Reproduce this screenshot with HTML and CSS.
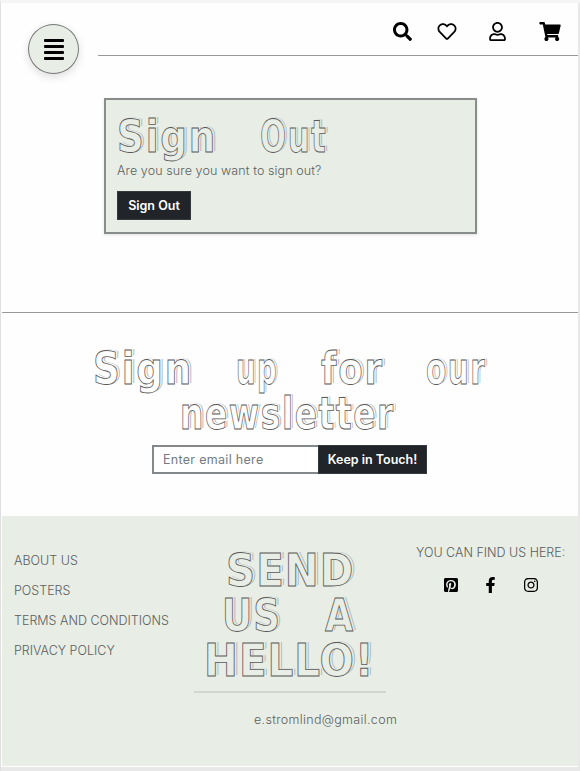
FILE: index.html
```html
<!DOCTYPE html>
<html lang="en">
<head>
<meta charset="utf-8">
<title>Sign Out</title>
<link rel="stylesheet" href="styles.css">
</head>
<body>
<div class="page">
  <header class="header">
    <button class="menu" aria-label="Menu"><span></span><span></span><span></span><span></span></button>
    <nav class="tools">
      <svg class="i-search" viewBox="0 0 512 512"><path d="M505 442.7L405.300 343c-4.500-4.500-10.600-7-17-7H372c27.600-35.300 44-79.700 44-128C416 93.100 322.900 0 208 0S0 93.100 0 208s93.100 208 208 208c48.300 0 92.700-16.400 128-44v16.300c0 6.400 2.500 12.500 7 17l99.700 99.700c9.400 9.400 24.600 9.400 33.900 0l28.300-28.300c9.400-9.400 9.400-24.600.1-34zM208 336c-70.700 0-128-57.200-128-128 0-70.700 57.200-128 128-128 70.700 0 128 57.200 128 128 0 70.700-57.200 128-128 128z"/></svg>
      <svg class="i-heart" viewBox="0 0 512 512"><path d="M458.400 64.300C400.600 15.700 311.300 23 256 79.300 200.700 23 111.400 15.600 53.600 64.300-21.600 127.600-10.600 230.800 43 285.500l175.400 178.700c10 10.200 23.400 15.900 37.600 15.900 14.300 0 27.600-5.600 37.600-15.800L469 285.600c53.500-54.700 64.700-157.900-10.600-221.300zm-23.600 187.500L259.400 430.500c-2.400 2.400-4.400 2.400-6.800 0L77.200 251.800c-36.500-37.200-43.900-107.600 7.300-150.700 38.900-32.700 98.900-27.800 136.500 10.500l35 35.700 35-35.700c37.800-38.500 97.800-43.200 136.500-10.600 51.100 43.100 43.500 113.900 7.300 150.800z"/></svg>
      <svg class="i-user" viewBox="0 0 448 512"><path d="M313.600 304c-28.700 0-42.500 16-89.600 16-47.100 0-60.800-16-89.600-16C60.200 304 0 364.200 0 438.400V464c0 26.500 21.500 48 48 48h352c26.500 0 48-21.500 48-48v-25.600c0-74.200-60.200-134.400-134.400-134.400zM400 464H48v-25.600c0-47.600 38.800-86.400 86.400-86.400 14.600 0 38.300 16 89.600 16 51.700 0 74.900-16 89.600-16 47.600 0 86.400 38.800 86.400 86.400V464zM224 288c79.500 0 144-64.500 144-144S303.500 0 224 0 80 64.500 80 144s64.500 144 144 144zm0-240c52.900 0 96 43.100 96 96s-43.100 96-96 96-96-43.100-96-96 43.100-96 96-96z"/></svg>
      <svg class="i-cart" viewBox="0 0 576 512"><path d="M528.120 301.319l47.273-208C578.806 78.301 567.391 64 551.990 64H159.208l-9.166-44.810C147.758 8.021 137.930 0 126.529 0H24C10.745 0 0 10.745 0 24v16c0 13.255 10.745 24 24 24h69.883l70.248 343.435C147.325 417.100 136 435.222 136 456c0 30.928 25.072 56 56 56s56-25.072 56-56c0-15.674-6.447-29.835-16.824-40h209.647C430.447 426.165 424 440.326 424 456c0 30.928 25.072 56 56 56s56-25.072 56-56c0-22.172-12.888-41.332-31.579-50.405l5.517-24.276c3.413-15.018-8.002-29.319-23.403-29.319H218.117l-6.545-32h293.145c11.206 0 20.920-7.754 23.403-18.681z"/></svg>
    </nav>
  </header>

  <main class="main">
    <section class="card">
      <h1 class="sketch sketch-card"><span class="line"><span class="word w-sign">Sign</span> <span class="word w-out">Out</span></span></h1>
      <p class="question">Are you sure you want to sign out?</p>
      <button class="btn signout">Sign Out</button>
    </section>
  </main>

  <section class="newsletter">
    <h2 class="sketch sketch-news">
      <span class="line"><span class="word w-sign">Sign</span> <span class="word w-up">up</span> <span class="word w-for">for</span> <span class="word w-our">our</span></span>
      <span class="line line-news"><span class="word w-news">newsletter</span></span>
    </h2>
    <form class="signup">
      <input type="email" placeholder="Enter email here">
      <button class="btn" type="button">Keep in Touch!</button>
    </form>
  </section>

  <footer class="footer">
    <ul class="links">
      <li>ABOUT US</li>
      <li>POSTERS</li>
      <li>TERMS AND CONDITIONS</li>
      <li>PRIVACY POLICY</li>
    </ul>
    <div class="hello">
      <h2 class="sketch sketch-hello">
        <span class="line line-send"><span class="word">SEND</span></span>
        <span class="line line-us"><span class="word w-us">US</span> <span class="word w-a">A</span></span>
        <span class="line line-hello"><span class="word">HELLO!</span></span>
      </h2>
      <hr>
      <p class="mail">e.stromlind@gmail.com</p>
    </div>
    <div class="social">
      <p class="find">YOU CAN FIND US HERE:</p>
      <div class="icons">
        <svg class="i-pin" viewBox="0 0 448 512"><path d="M448 80v352c0 26.500-21.500 48-48 48H154.400c9.800-16.400 22.400-40 27.400-59.300 3-11.500 15.300-58.400 15.300-58.400 8 15.300 31.400 28.200 56.300 28.200 74.100 0 127.400-68.100 127.400-152.700 0-81.100-66.200-141.800-151.400-141.800-106 0-162.200 71.100-162.200 148.600 0 36 19.200 80.800 49.800 95.100 4.700 2.200 7.100 1.200 8.200-3.300.8-3.400 5-20.100 6.800-27.800.6-2.500.3-4.600-1.700-7-10.100-12.300-18.300-34.900-18.300-56 0-54.200 41-106.600 110.900-106.600 60.300 0 102.600 41.100 102.600 99.900 0 66.400-33.500 112.400-77.200 112.400-24.100 0-42.100-19.900-36.400-44.400 6.900-29.200 20.300-60.700 20.300-81.800 0-53-75.500-45.700-75.500 25 0 21.700 7.300 36.500 7.300 36.500-31.400 132.800-36.100 134.500-29.600 192.600l2.200.8H48c-26.500 0-48-21.500-48-48V80c0-26.500 21.500-48 48-48h352c26.500 0 48 21.500 48 48z"/></svg>
        <svg class="i-fb" viewBox="0 0 320 512"><path d="M279.140 288l14.220-92.660h-88.910v-60.130c0-25.350 12.420-50.060 52.240-50.060h40.420V6.260S260.430 0 225.360 0c-73.220 0-121.080 44.380-121.080 124.720v70.620H22.890V288h81.390v224h100.170V288z"/></svg>
        <svg class="i-ig" viewBox="0 0 448 512"><path d="M224.100 141c-63.600 0-114.900 51.300-114.900 114.900s51.300 114.900 114.900 114.900S339 319.500 339 255.900 287.700 141 224.100 141zm0 189.600c-41.100 0-74.700-33.500-74.700-74.700s33.500-74.700 74.700-74.700 74.700 33.500 74.700 74.700-33.600 74.700-74.700 74.700zm146.400-194.300c0 14.900-12 26.800-26.800 26.800-14.900 0-26.800-12-26.800-26.800s12-26.800 26.800-26.800 26.800 12 26.800 26.800zm76.100 27.200c-1.700-35.900-9.900-67.700-36.200-93.900-26.200-26.200-58-34.400-93.900-36.200-37-2.100-147.900-2.100-184.900 0-35.800 1.700-67.600 9.900-93.900 36.100s-34.400 58-36.200 93.900c-2.100 37-2.100 147.900 0 184.900 1.700 35.900 9.900 67.700 36.200 93.900s58 34.400 93.900 36.200c37 2.100 147.900 2.100 184.900 0 35.900-1.700 67.700-9.900 93.900-36.200 26.200-26.200 34.400-58 36.200-93.900 2.100-37 2.100-147.800 0-184.800zM398.800 388c-7.800 19.600-22.900 34.700-42.600 42.600-29.500 11.700-99.500 9-132.100 9s-102.700 2.600-132.100-9c-19.600-7.800-34.700-22.900-42.600-42.600-11.700-29.500-9-99.500-9-132.100s-2.600-102.700 9-132.100c7.800-19.600 22.900-34.700 42.600-42.600 29.500-11.700 99.500-9 132.100-9s102.700-2.600 132.100 9c19.600 7.800 34.700 22.900 42.600 42.600 11.700 29.500 9 99.500 9 132.100s2.700 102.700-9 132.100z"/></svg>
      </div>
    </div>
  </footer>
</div>
</body>
</html>
```
FILE: styles.css
```css
* { box-sizing: border-box; }
html { height: 771px; overflow: hidden; background: #e8e8e8; }
body {
  margin: 0;
  height: 771px;
  border-top: 3px solid #f5f5f5;
  border-left: 1px solid #e0e0e0;
  font: 300 12.5px/20px Inter, "Liberation Sans", sans-serif;
  color: #5c5f60;
}
h1, h2, p, ul { margin: 0; padding: 0; }
ul { list-style: none; }
button { font: inherit; padding: 0; }

.page { width: 577px; height: 764px; padding-left: 1px; background: #fefefe; }

.header { display: flex; height: 53px; }
.menu {
  display: flex;
  flex: none;
  flex-direction: column;
  align-items: center;
  justify-content: center;
  gap: 3px;
  width: 51px;
  height: 50px;
  margin: 21px 19px 0 26px;
  border: 1px solid #777;
  border-radius: 50%;
  background: #e8ede5;
  box-shadow: 0 3px 8px rgba(0, 0, 0, .13);
}
.menu span { width: 20px; height: 3px; border-radius: 1px; background: #000; }
.tools {
  display: flex;
  flex: 1;
  height: 53px;
  padding: 19px 0 0 295px;
  border-bottom: 1px solid #999;
}
.tools svg { flex: none; height: 19px; }
.i-search { width: 19px; margin-right: 25px; }
.i-heart { width: 20px; margin-right: 32px; }
.i-user { width: 17px; margin-right: 33px; }
.i-cart { width: 22px; }

.main { height: 257px; padding: 42px 0 0 102px; border-bottom: 1px solid #999; }
.card {
  width: 373px;
  height: 136px;
  padding: 14px 0 0 11px;
  border: 2px solid #888d8c;
  background: #e8ede5;
  box-shadow: 0 1px 3px rgba(0, 0, 0, .12);
}
.question { height: 20px; margin-top: 2px; letter-spacing: .1px; white-space: nowrap; }
.btn {
  border: 1px solid #343a40;
  background: #212529;
  color: #fff;
  font-weight: 600;
  white-space: nowrap;
}
.signout { display: block; width: 74px; height: 29px; margin-top: 10px; }

.sketch {
  --paper: #fefefe;
  font: bold 45px/45px "DejaVu Sans Condensed", "DejaVu Sans", sans-serif;
  font-stretch: condensed;
  letter-spacing: 2px;
  white-space: nowrap;
  color: var(--paper);
  -webkit-text-stroke: .8px #5a5a5a;
  text-shadow: 2px -1px 0 var(--paper), 3px -1px 0 #b4b8b8;
}
.sketch-card, .sketch-hello { --paper: #e8ede5; }
.line { display: flex; height: 45px; }
.word { display: block; flex: none; height: 45px; transform-origin: 0 50%; }
.w-sign { width: 143px; transform: scaleX(.92); }
.w-out { transform: scaleX(.76); }
.w-up { width: 85px; transform: scaleX(.68); }
.w-for { width: 105px; transform: scaleX(.88); }
.w-our { width: 60px; transform: scaleX(.73); }
.w-news { transform: scaleX(.81); }
.w-us { width: 103px; transform: scaleX(.92); }
.w-a { transform: scaleX(.9); }

.newsletter { height: 203px; padding-top: 33px; }
.sketch-news { padding-left: 91px; }
.line-news { padding-left: 87px; }
.signup { display: flex; width: 275px; height: 29px; margin: 9px 0 0 150px; }
.signup input {
  width: 166px;
  padding: 0 0 0 9px;
  border: 2px solid #85888a;
  border-right: 0;
  border-radius: 0;
  background: #fff;
  font: 400 12.5px Inter, sans-serif;
  outline: 0;
}
.signup input::placeholder { color: #737b82; letter-spacing: .3px; }
.signup .btn { width: 109px; }

.footer { display: flex; height: 250px; background: #e8ede5; }
.links { width: 192px; padding: 35px 0 0 12px; }
.links li { height: 30px; white-space: nowrap; }
.hello { width: 192px; padding-top: 32px; }
.sketch-hello { letter-spacing: 1px; }
.line-send { padding-left: 32px; }
.line-us { padding-left: 28px; }
.line-hello { padding-left: 10px; }
.hello hr { height: 2px; margin: 8px 0 17px; border: 0; background: #d2d7d0; }
.mail { padding-left: 60px; letter-spacing: .32px; white-space: nowrap; }
.social { flex: 1; padding: 27px 0 0 30px; }
.find { white-space: nowrap; }
.icons { display: flex; align-items: center; padding: 14px 0 0 28px; }
.icons svg { height: 16px; }
.i-pin { width: 14px; margin-right: 27px; }
.i-fb { width: 11px; margin-right: 28px; }
.i-ig { width: 14px; }
```
